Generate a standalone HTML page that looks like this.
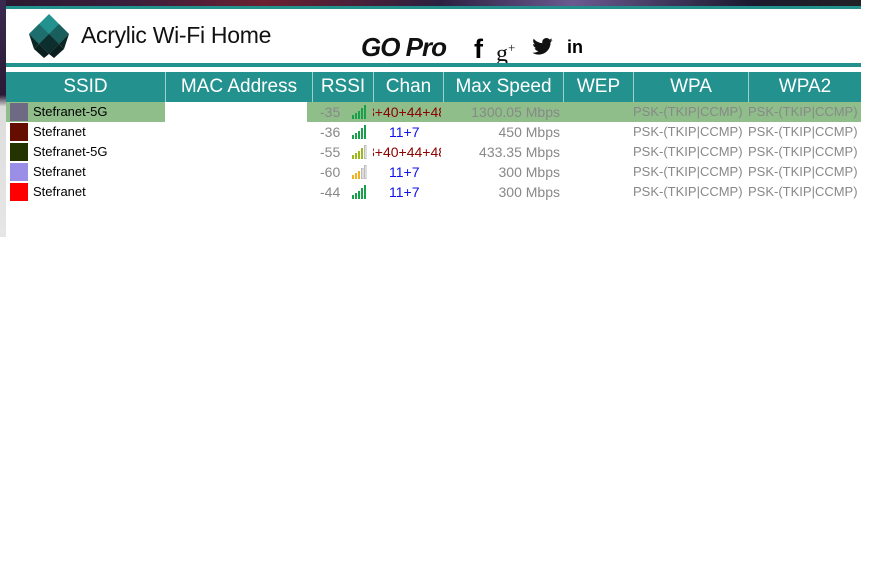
<html><head><style>
body{margin:0;width:881px;height:572px;background:#fff;position:relative;overflow:hidden;font-family:"Segoe UI","Liberation Sans","DejaVu Sans",sans-serif}
.a{position:absolute}
.h{position:absolute;top:72px;height:30px;background:#23928f;color:#fff;font-size:19px;line-height:29px;text-align:center;border-left:1px solid #9fd0cd;box-sizing:border-box}
.r{position:absolute;font-size:13px;line-height:20px;white-space:nowrap}
.g{color:#888}
.b{color:#1010ee}
.m{color:#8b0000}
</style></head><body>
<div class="a" style="left:0;top:0;width:881px;height:7px;background:linear-gradient(90deg,#2a1a30,#3a1e3c 15%,#6a2030 30%,#2b2040 50%,#6a5a90 65%,#1c1a30 85%,#222 100%)"></div>
<div class="a" style="left:0;top:0;width:6px;height:237px;background:linear-gradient(#3a2a50,#2a1a35 40%,#ddd 45%,#e6e6e6)"></div>
<div class="a" style="left:6px;top:6px;width:855px;height:3px;background:#23928f"></div>
<div class="a" style="left:861px;top:0;width:20px;height:9px;background:#fff"></div>
<svg class="a" style="left:27px;top:14px" width="44" height="44" viewBox="0 0 44 44">
<polygon points="22,0 42,20 22,40 2,20" fill="#23928f"/>
<polygon points="2,20 12,30 22,20 12,10" fill="#1d6e6c"/>
<polygon points="22,20 32,30 42,20 32,10" fill="#1a5f5d"/>
<polygon points="12,30 22,40 32,30 22,20" fill="#0e2e2d"/>
<polygon points="2,20 12,30 7,35" fill="#0c2625"/>
<polygon points="42,20 32,30 37,35" fill="#0c2625"/>
<polygon points="12,30 22,40 17,44 7,35" fill="#0a1f1e"/>
<polygon points="32,30 22,40 27,44 37,35" fill="#0a1f1e"/>
</svg>
<div class="a" style="left:81px;top:20px;font-size:23px;color:#111;line-height:30px;letter-spacing:-0.3px">Acrylic Wi-Fi Home</div>
<div class="a" style="left:361px;top:30px;font-size:26px;font-weight:bold;font-style:italic;color:#111;line-height:34px;letter-spacing:-1px">GO Pro</div>
<div class="a" style="left:474px;top:34px;font-size:27px;font-weight:bold;color:#000;font-family:'Liberation Sans';line-height:30px">f</div>
<div class="a" style="left:496px;top:34px;font-size:24px;color:#111;font-family:'Liberation Serif';line-height:28px">g<sup style="font-size:13px">+</sup></div>
<svg class="a" style="left:532px;top:38px" width="21" height="17" viewBox="0 0 24 20"><path d="M24 2.4c-.9.4-1.8.6-2.8.8 1-.6 1.8-1.6 2.200-2.7-1 .6-2 1-3.1 1.2C19.4.7 18.1 0 16.6 0c-2.7 0-4.9 2.2-4.9 4.9 0 .4 0 .8.1 1.1C7.7 5.8 4.1 3.9 1.7.9c-.4.7-.7 1.6-.7 2.5 0 1.7.9 3.2 2.2 4.1-.8 0-1.6-.2-2.2-.6v.1c0 2.4 1.7 4.4 3.9 4.8-.4.1-.8.2-1.3.2-.3 0-.6 0-.9-.1.6 2 2.4 3.4 4.6 3.4-1.7 1.3-3.800 2.1-6.1 2.1-.4 0-.8 0-1.2-.1 2.2 1.4 4.8 2.2 7.5 2.2 9.1 0 14-7.5 14-14v-.6c1-.7 1.8-1.6 2.4-2.5z" fill="#111"/></svg>
<div class="a" style="left:567px;top:35px;font-size:18px;font-weight:bold;color:#000;font-family:'Liberation Sans';line-height:24px">in</div>
<div class="a" style="left:6px;top:63px;width:855px;height:4px;background:#23928f"></div>
<div class="h" style="left:6px;width:159px;border-left:none">SSID</div>
<div class="h" style="left:165px;width:147px">MAC Address</div>
<div class="h" style="left:312px;width:61px">RSSI</div>
<div class="h" style="left:373px;width:70px">Chan</div>
<div class="h" style="left:443px;width:120px">Max Speed</div>
<div class="h" style="left:563px;width:70px">WEP</div>
<div class="h" style="left:633px;width:115px">WPA</div>
<div class="h" style="left:748px;width:113px">WPA2</div>
<div class="a" style="left:6px;top:102px;width:159px;height:20px;background:#8fbe8b"></div>
<div class="a" style="left:307px;top:102px;width:554px;height:20px;background:#8fbe8b"></div>

<div class="a" style="left:10px;top:103px;width:18px;height:18px;background:#6e6a84"></div>
<div class="a" style="left:10px;top:123px;width:18px;height:18px;background:#650e00"></div>
<div class="a" style="left:10px;top:143px;width:18px;height:18px;background:#253300"></div>
<div class="a" style="left:10px;top:163px;width:18px;height:18px;background:#9a8ee6"></div>
<div class="a" style="left:10px;top:183px;width:18px;height:18px;background:#ff0000"></div>

<div class="r" style="left:33px;top:102px">Stefranet-5G</div>
<div class="r" style="left:33px;top:122px">Stefranet</div>
<div class="r" style="left:33px;top:142px">Stefranet-5G</div>
<div class="r" style="left:33px;top:162px">Stefranet</div>
<div class="r" style="left:33px;top:182px">Stefranet</div>

<div class="r g" style="left:320px;top:102px;font-size:14px">-35</div>
<div class="r g" style="left:320px;top:122px;font-size:14px">-36</div>
<div class="r g" style="left:320px;top:142px;font-size:14px">-55</div>
<div class="r g" style="left:320px;top:162px;font-size:14px">-60</div>
<div class="r g" style="left:320px;top:182px;font-size:14px">-44</div>

<svg class="a" style="left:352px;top:105px" width="16" height="96">
<g><rect x="0" y="10" width="2" height="4" fill="#1aa04a"/><rect x="3" y="8" width="2" height="6" fill="#1aa04a"/><rect x="6" y="6" width="2" height="8" fill="#1aa04a"/><rect x="9" y="3" width="2" height="11" fill="#1aa04a"/><rect x="12" y="0" width="2" height="14" fill="#1aa04a"/></g>
<g transform="translate(0,20)"><rect x="0" y="10" width="2" height="4" fill="#1aa04a"/><rect x="3" y="8" width="2" height="6" fill="#1aa04a"/><rect x="6" y="6" width="2" height="8" fill="#1aa04a"/><rect x="9" y="3" width="2" height="11" fill="#1aa04a"/><rect x="12" y="0" width="2" height="14" fill="#1aa04a"/></g>
<g transform="translate(0,40)"><rect x="0" y="10" width="2" height="4" fill="#9cb81a"/><rect x="3" y="8" width="2" height="6" fill="#9cb81a"/><rect x="6" y="6" width="2" height="8" fill="#9cb81a"/><rect x="9" y="3" width="2" height="11" fill="#9cb81a"/><rect x="12.5" y="0.5" width="1.5" height="13" fill="none" stroke="#bbb"/></g>
<g transform="translate(0,60)"><rect x="0" y="10" width="2" height="4" fill="#f0b020"/><rect x="3" y="8" width="2" height="6" fill="#f0b020"/><rect x="6" y="6" width="2" height="8" fill="#f0b020"/><rect x="9.5" y="3.5" width="1.5" height="10" fill="none" stroke="#bbb"/><rect x="12.5" y="0.5" width="1.5" height="13" fill="none" stroke="#bbb"/></g>
<g transform="translate(0,80)"><rect x="0" y="10" width="2" height="4" fill="#1aa04a"/><rect x="3" y="8" width="2" height="6" fill="#1aa04a"/><rect x="6" y="6" width="2" height="8" fill="#1aa04a"/><rect x="9" y="3" width="2" height="11" fill="#1aa04a"/><rect x="12" y="0" width="2" height="14" fill="#1aa04a"/></g>
</svg>

<div class="a" style="left:373px;top:102px;width:68px;height:100px;overflow:hidden">
<div class="r m" style="left:-6px;top:0;font-size:14px">3+40+44+48</div>
<div class="r b" style="left:16px;top:20px;font-size:14px">11+7</div>
<div class="r m" style="left:-6px;top:40px;font-size:14px">3+40+44+48</div>
<div class="r b" style="left:16px;top:60px;font-size:14px">11+7</div>
<div class="r b" style="left:16px;top:80px;font-size:14px">11+7</div>
</div>

<div class="r g" style="right:321px;top:102px;font-size:14px">1300.05 Mbps</div>
<div class="r g" style="right:321px;top:122px;font-size:14px">450 Mbps</div>
<div class="r g" style="right:321px;top:142px;font-size:14px">433.35 Mbps</div>
<div class="r g" style="right:321px;top:162px;font-size:14px">300 Mbps</div>
<div class="r g" style="right:321px;top:182px;font-size:14px">300 Mbps</div>

<div class="r g" style="left:633px;top:102px">PSK-(TKIP|CCMP)</div>
<div class="r g" style="left:633px;top:122px">PSK-(TKIP|CCMP)</div>
<div class="r g" style="left:633px;top:142px">PSK-(TKIP|CCMP)</div>
<div class="r g" style="left:633px;top:162px">PSK-(TKIP|CCMP)</div>
<div class="r g" style="left:633px;top:182px">PSK-(TKIP|CCMP)</div>
<div class="r g" style="left:748px;top:102px">PSK-(TKIP|CCMP)</div>
<div class="r g" style="left:748px;top:122px">PSK-(TKIP|CCMP)</div>
<div class="r g" style="left:748px;top:142px">PSK-(TKIP|CCMP)</div>
<div class="r g" style="left:748px;top:162px">PSK-(TKIP|CCMP)</div>
<div class="r g" style="left:748px;top:182px">PSK-(TKIP|CCMP)</div>
</body></html>
